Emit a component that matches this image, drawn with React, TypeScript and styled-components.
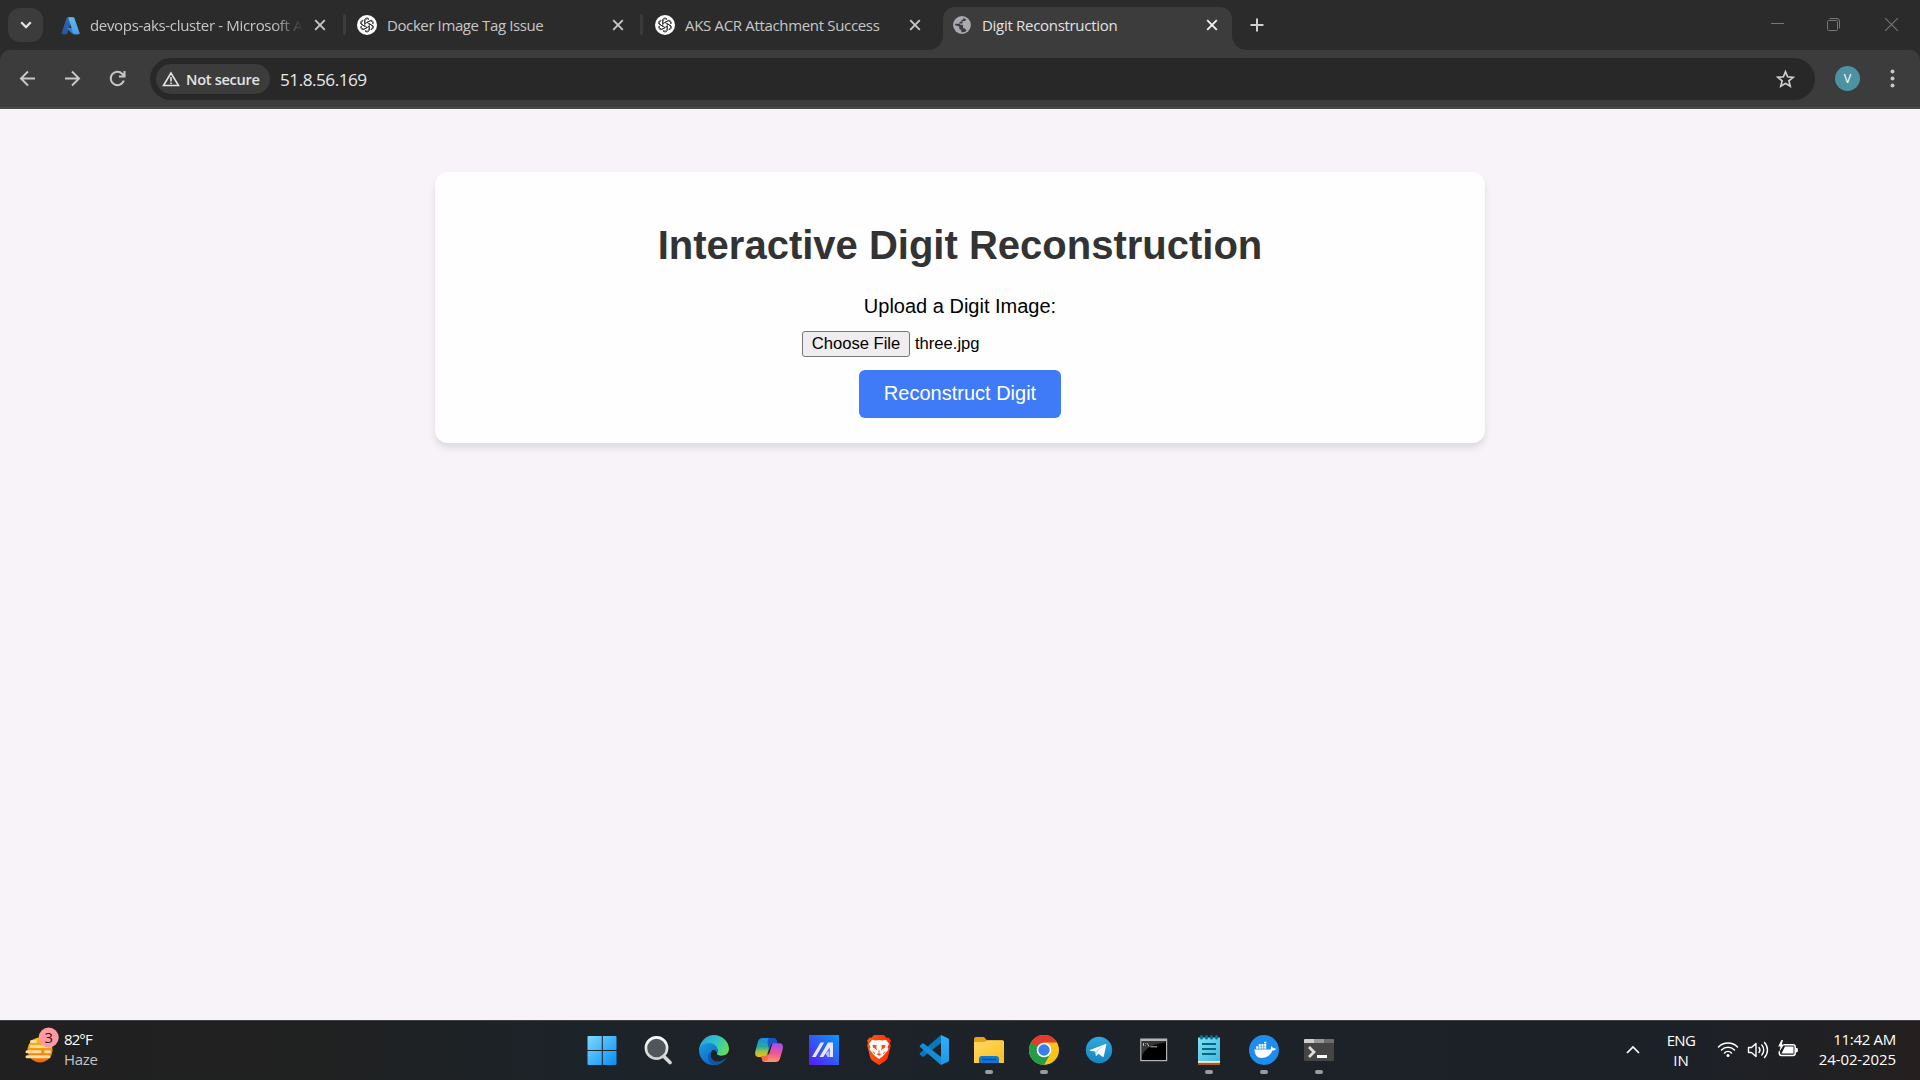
import React from "react";
import styled, { createGlobalStyle } from "styled-components";

const Global = createGlobalStyle`
  * { box-sizing: border-box; }
  html, body { margin: 0; padding: 0; overflow: hidden; background: #f7f3f9; }
  svg { display: block; flex: none; }
`;

const Screen = styled.div`
  width: 1920px;
  height: 1080px;
  display: flex;
  flex-direction: column;
  font-family: "Open Sans", "Noto Sans", sans-serif;
`;

/* ---------- browser ---------- */
const TabStrip = styled.header`
  height: 50px;
  background: #2b2b2b;
  display: flex;
  align-items: flex-start;
  padding-left: 8px;
`;

const TabSearch = styled.button`
  width: 35px;
  height: 34px;
  margin: 8px 4px 0 0;
  padding: 0;
  border: 0;
  border-radius: 12px;
  background: #3c3c3c;
  display: grid;
  place-items: center;
`;

const TabBox = styled.div<{ $active?: boolean; $w: number; $left: number; $right: number }>`
  width: ${(p) => p.$w}px;
  height: ${(p) => (p.$active ? 43 : 36)}px;
  margin-top: 7px;
  padding: 0 ${(p) => p.$right}px ${(p) => (p.$active ? 7 : 0)}px ${(p) => p.$left}px;
  display: flex;
  align-items: center;
  border-radius: 12px 12px 0 0;
  background: ${(p) => (p.$active ? "#3c3c3c" : "transparent")};
  color: ${(p) => (p.$active ? "#e3e3e3" : "#c7c7c7")};
`;

const Favicon = styled.span`
  width: 20px;
  margin-right: 10px;
  display: flex;
  justify-content: center;
`;

const TabTitle = styled.span<{ $spacing: number; $fade?: boolean }>`
  flex: 1;
  min-width: 0;
  overflow: hidden;
  white-space: nowrap;
  font-size: 15px;
  line-height: 22px;
  letter-spacing: ${(p) => p.$spacing}px;
  margin-right: 11px;
  ${(p) => p.$fade && "mask-image: linear-gradient(90deg, #000 86%, transparent 100%);"}
`;

const Separator = styled.i`
  width: 3px;
  height: 21px;
  margin-top: 14px;
  border-radius: 2px;
  background: #3c3c3c;
`;

const Flare = styled.i<{ $side: "left" | "right" }>`
  width: 14px;
  height: 14px;
  margin-top: 36px;
  background: radial-gradient(
    circle at ${(p) => (p.$side === "left" ? "0 0" : "100% 0")},
    transparent 13.5px,
    #3c3c3c 14.2px
  );
`;

const NewTab = styled.div`
  padding: 18px 0 0 4px;
  flex: 1;
`;

const WindowControls = styled.div`
  display: flex;
  gap: 43px;
  padding: 18px 22px 0 0;

  svg:last-child { margin-left: 2px; }
`;

const ToolbarBack = styled.div`
  background: #2b2b2b;
`;

const Toolbar = styled.div`
  height: 59px;
  display: flex;
  align-items: center;
  padding: 0 20px 1px 18px;
  background: #3c3c3c;
  border-bottom: 2px solid #4a4849;
  border-radius: 10px 10px 0 0;
`;

const NavButtons = styled.div`
  display: flex;
  gap: 25px;
  width: 132px;
`;

const Omnibox = styled.div`
  width: 1665px;
  height: 42px;
  margin-top: 1px;
  padding: 0 19px 0 6px;
  border-radius: 21px;
  background: #282828;
  display: flex;
  align-items: center;
`;

const Chip = styled.div`
  width: 114px;
  height: 30px;
  padding-left: 6px;
  display: flex;
  align-items: center;
  gap: 6px;
  border-radius: 15px;
  background: #3c3c3c;
  color: #e3e3e3;
  font-size: 14.6px;
  font-weight: 600;
  letter-spacing: -0.3px;
  white-space: nowrap;
`;

const Url = styled.span`
  flex: 1;
  padding: 1px 0 0 10px;
  color: #e8e8e8;
  font-size: 17.2px;
  letter-spacing: -0.5px;
`;

const Avatar = styled.div`
  width: 25px;
  height: 25px;
  margin: 0 28px 0 20px;
  border-radius: 50%;
  background: #4c92a3;
  color: #fff;
  font-size: 12.5px;
  line-height: 25px;
  text-align: center;
`;

/* ---------- page ---------- */
const Page = styled.main`
  flex: 1;
  background: #f7f3f9;
  padding-top: 63px;
  font-family: "Liberation Sans", Arial, sans-serif;
`;

const Card = styled.section`
  width: 1050px;
  height: 271px;
  margin: 0 auto;
  padding-top: 50px;
  border-radius: 12.5px;
  background: #fefefe;
  box-shadow: 0 5px 7.5px rgba(0, 0, 0, 0.1);
  display: flex;
  flex-direction: column;
  align-items: center;
`;

const Heading = styled.h1`
  margin: 0;
  height: 46px;
  font-size: 40px;
  line-height: 46px;
  color: #333;
  white-space: nowrap;
`;

const UploadLabel = styled.label`
  margin-top: 26px;
  height: 24px;
  font-size: 20px;
  line-height: 24px;
  color: #000;
`;

const FileRow = styled.div`
  width: 316px;
  height: 26px;
  margin-top: 13px;
  display: flex;
  align-items: center;
  gap: 5px;
  font-size: 16.6px;
  color: #000;
`;

const ChooseFile = styled.button`
  width: 108px;
  height: 26px;
  padding: 0;
  border: 1px solid #767676;
  border-radius: 3px;
  background: #f0edf0;
  font: inherit;
  color: #000;
  line-height: 22px;
`;

const Submit = styled.button`
  width: 202px;
  height: 48px;
  margin-top: 13px;
  padding: 0 0 2px;
  border: 0;
  border-radius: 6px;
  background: #3f7bf7;
  color: #fff;
  font: 20px "Liberation Sans", Arial, sans-serif;
`;

/* ---------- taskbar ---------- */
const Taskbar = styled.footer`
  height: 60px;
  border-top: 1px solid #3f4144;
  background: linear-gradient(90deg, #202020 0%, #202121 16%, #1c2329 30%, #1c2228 65%, #1c2128 86%, #222021 98%, #261f1f 100%);
  display: flex;
  color: #fff;
`;

const Weather = styled.div`
  width: 575px;
  display: flex;
  padding-left: 24px;
`;

const WeatherIcon = styled.div`
  width: 40px;
  padding-top: 5px;
`;

const Stack = styled.div<{ $align: string; $w?: number; $top?: number }>`
  ${(p) => p.$w && `width: ${p.$w}px;`}
  padding-top: ${(p) => p.$top ?? 8}px;
  text-align: ${(p) => p.$align};
  font-size: 15px;
  line-height: 20px;
  white-space: nowrap;
`;

const Line = styled.div<{ $dim?: boolean; $spacing?: number }>`
  letter-spacing: ${(p) => p.$spacing ?? 0}px;
  color: ${(p) => (p.$dim ? "#c4c4c4" : "#fff")};
`;

const Apps = styled.nav`
  display: flex;
  flex: 1;
`;

const AppCell = styled.div<{ $w: number }>`
  width: ${(p) => p.$w}px;
  display: flex;
  flex-direction: column;
  align-items: center;
  padding-top: 14px;
`;

const Running = styled.i`
  width: 8px;
  height: 4px;
  margin-top: 5px;
  border-radius: 2px;
  background: #9b9c9e;
`;

const Tray = styled.div`
  display: flex;
  width: 294px;
`;

const TrayIcons = styled.div`
  display: flex;
  gap: 8px;
  padding: 18px 0 0 21px;
  width: 122px;
`;

const Chevron = styled.div`
  padding: 23px 26px 0 0;
`;

/* ---------- icons ---------- */
const Close = ({ color = "#c7c7c7" }: { color?: string }) => (
  <svg width="12" height="12" viewBox="0 0 12 12" stroke={color} strokeWidth="1.9">
    <path d="M1.2 1.2 10.8 10.8M10.8 1.2 1.2 10.8" />
  </svg>
);

const Azure = () => (
  <svg width="19" height="19" viewBox="0 0 96 96">
    <defs>
      <linearGradient id="az1" x1="0" y1="0" x2="0" y2="1"><stop stopColor="#2d68b5" /><stop offset="1" stopColor="#2458a4" /></linearGradient>
      <linearGradient id="az2" x1="0" y1="0" x2="0" y2="1"><stop stopColor="#65b9ea" /><stop offset="1" stopColor="#4a9be8" /></linearGradient>
    </defs>
    <path d="M33 6h27L32 89a4 4 0 0 1-4 3H7a4 4 0 0 1-4-6L29 9a4 4 0 0 1 4-3z" fill="url(#az1)" />
    <path d="M71 60H28l28 28 15 4h14z" fill="#3b7fd3" />
    <path d="M67 9a4 4 0 0 0-4-3H36l27 86h27a4 4 0 0 0 4-6z" fill="url(#az2)" />
  </svg>
);

const Knot = () => (
  <svg width="20" height="20" viewBox="-10 -10 20 20" fill="none">
    <circle r="10" fill="#fff" />
    {[0, 60, 120, 180, 240, 300].map((a) => (
      <path key={a} transform={`rotate(${a})`} d="M-2.2 1.3V-3.9A2.55 2.55 0 0 1 2.1-5.4M0-2.6 3.9-4.8A2.6 2.6 0 0 1 6.2-1.4" stroke="#222" strokeWidth=".8" />
    ))}
  </svg>
);

const Globe = () => (
  <svg width="18" height="18" viewBox="2 2 20 20">
    <circle cx="12" cy="12" r="9.900" fill="#a9aab0" />
    <path d="M13.500 4.100C14 5.700 13 6.300 11.500 6.300v2H9.300v2.200H4.200a8 8 0 0 1-.1 1.600l4.800 1.600v1.500c0 1.200 1 2.200 2.300 2.200v2.700a8.200 8.200 0 0 0 6-1.600l-1.200-1.600c-.3-.8-1-1.300-1.900-1.300h-1v-2.800c0-.6-.5-1-1-1H9.700v-1.500h1.800c.7 0 1.200-.5 1.200-1.100V7.500h2a2 2 0 0 0 1.800-2z" fill="#3c3c3c" />
  </svg>
);

const Defs = () => (
  <svg width="0" height="0" style={{ position: "absolute" }}>
    <defs>
      <linearGradient id="win" gradientUnits="userSpaceOnUse" x1="0" y1="0" x2="29" y2="29"><stop stopColor="#7fdcff" /><stop offset="1" stopColor="#0a8ef5" /></linearGradient>
      <linearGradient id="edgeTop" x1="0" y1=".3" x2="1" y2=".7"><stop stopColor="#27a5de" /><stop offset=".5" stopColor="#33c4c8" /><stop offset="1" stopColor="#69df4c" /></linearGradient>
      <linearGradient id="edgeMid" x1="0" y1="0" x2=".7" y2="1"><stop stopColor="#1aa0e4" /><stop offset="1" stopColor="#0a62c4" /></linearGradient>
      <linearGradient id="copL" x1="0" y1="0" x2="0" y2="1"><stop stopColor="#168ee8" /><stop offset=".45" stopColor="#29a9a0" /><stop offset=".75" stopColor="#a7c83a" /><stop offset="1" stopColor="#f8b516" /></linearGradient>
      <linearGradient id="copR" x1=".3" y1="0" x2=".2" y2="1"><stop stopColor="#a64ded" /><stop offset=".5" stopColor="#ed5797" /><stop offset="1" stopColor="#ff9c5c" /></linearGradient>
      <linearGradient id="asus" x1="0" y1="1" x2="1" y2="0"><stop stopColor="#5b19ee" /><stop offset="1" stopColor="#0799ff" /></linearGradient>
      <linearGradient id="brave" x1="0" y1="0" x2="1" y2="0"><stop stopColor="#ff5a12" /><stop offset="1" stopColor="#ff2908" /></linearGradient>
      <linearGradient id="folder" x1="0" y1="0" x2="1" y2="1"><stop stopColor="#ffd968" /><stop offset="1" stopColor="#ffbf18" /></linearGradient>
      <linearGradient id="tg" x1="0" y1="0" x2="0" y2="1"><stop stopColor="#31a8e0" /><stop offset="1" stopColor="#1684bf" /></linearGradient>
      <linearGradient id="note" x1="0" y1="0" x2="1" y2="1"><stop stopColor="#82def6" /><stop offset="1" stopColor="#3eb9df" /></linearGradient>
      <linearGradient id="sun" x1="0" y1="0" x2="0" y2="1"><stop stopColor="#f9c40b" /><stop offset="1" stopColor="#ee6410" /></linearGradient>
      <linearGradient id="lens" x1="0" y1="0" x2="0" y2="1"><stop stopColor="#fff" /><stop offset="1" stopColor="#d0d0d0" /></linearGradient>
      <linearGradient id="code" x1="0" y1="0" x2="0" y2="1"><stop stopColor="#32adf5" /><stop offset="1" stopColor="#1c98ea" /></linearGradient>
    </defs>
  </svg>
);

const Icon = ({ children }: { children: React.ReactNode }) => (
  <svg width="30" height="30" viewBox="0 0 30 30">{children}</svg>
);

const appIcons: { name: string; width?: number; running?: boolean; art: React.ReactNode }[] = [
  { name: "start", width: 54, art: <g fill="url(#win)"><path d="M.5 2q0-1 1-1h13.300v14H.5zM15.800 1h12.700q1 0 1 1v13H15.800zM.5 16h14.300v14H1.500q-1 0-1-1zM15.800 16h13.700v13q0 1-1 1H15.800z" /></g> },
  { name: "search", width: 57, art: <><path d="M20.500 21 27 27.500" stroke="#d8d8d8" strokeWidth="3.600" strokeLinecap="round" /><circle cx="13.500" cy="13" r="10.600" fill="#50565a" stroke="url(#lens)" strokeWidth="2.600" /></> },
  { name: "edge", art: <>
    <path d="M0 15.500C.5 6.500 7 0 15 0s15 6.600 15 13.800c0 4.600-3.400 7-7.500 7-3.500 0-5-1.500-4.500-2.500 1.600-2.500.4-5.600-3-6.800C9.500 9.600 3 10.500 0 15.500z" fill="url(#edgeTop)" />
    <path d="M0 15.500c.5-4.600 5-7.500 9.500-7.500 4.800 0 9 2.500 9 6.800 0 2-1 3-1 3-.6-2.500-2.500-3.300-4-2.500-3.500 3-2.500 11.500 6 14.200A15 15 0 0 1 0 15.500z" fill="url(#edgeMid)" />
    <path d="M11.500 17c-1.500 7 4.500 11.500 11 8.800 2-.8 3.800-2 5.300-3.300-3 5.500-8 7.700-13 7.500-6-3-7.500-9.500-3.300-13z" fill="#1157a0" />
    <path d="M12.800 16.500c.8-2 3-2 4 .3.500 1.200.2 1.600 1.200 2.700 2.500 2.300 6.500 1.500 9.500.3-1 1.800-2.500 3.200-4.500 4-4.500 1.800-9.800-2-10.200-7.300z" fill="#1c2329" />
  </> },
  { name: "copilot", art: <>
    <path d="M8.500 3h11q2.200 0 3 2.600L23.500 9h-5q-2 0-2.700 2.200L13 20q-.8 2-3 2H4.500Q.5 22 1.300 16.500L4 6.500Q5 3 8.500 3z" fill="url(#copL)" />
    <path d="M15.500 3h4q2.200 0 3 2.600L23.500 9h-5q-2 0-2.700 2.200L15 14l-1.500-6q0-4 2-5z" fill="#1b53c8" />
    <path d="M21.500 27h-11q-2 0-2.500-2.600L7 21h4q2 0 2.700-2.200l3-8.600q.8-2 3-2h5.800q4.200 0 3.300 5.500L26 23.500q-1 3.500-4.500 3.500z" fill="url(#copR)" />
    <path d="M13.200 20 17 9.500q.5-1 1.500-1.200L15.500 18q-1 2.500-2.300 2z" fill="#1c2329" />
    <path d="M7 21h3.500q2.200 0 3-2.500L15 19l-1.500 4.500q-1.200 3.200-3.300 3.500-1.700 0-2.200-2.600z" fill="#f2672f" opacity=".75" />
  </> },
  { name: "asus", art: <><path d="M0 0h30v30H0z" fill="url(#asus)" /><path d="M3 22 11.500 7.500h3.700L6.700 22zM10.500 22 19 7.500h5V22h-3.300v-9.500L14.200 22z" fill="#e6e8ff" /><path d="m16.500 18.500 3.200-3 1 6.500h-2.200z" fill="#b9bdf8" /></> },
  { name: "brave", art: <>
    <path d="M10 0h10l2.500 2.700 2-.3L27 5.500l-1 2.500.8 2.500-3 12q-.5 2-2.300 3.200L15 30l-6.500-4.300q-1.800-1.200-2.300-3.200l-3-12L4 8 3 5.500l2.500-3.100 2 .3z" fill="url(#brave)" />
    <path d="m8 4.800 3.500.7L15 5l3.500.5 3.500-.7 3 4-1.500 3.500 1 2-3 4-2.500 2.700L15 24l-4-3-2.500-2.700-3-4 1-2L5 8.800z" fill="#fff" />
    <path d="m8.500 9.800 4.500.5-.8 1.700.8 3.500-1.500-1.500-2.500-1.500zM21.500 9.800l-4.500.5.800 1.700-.8 3.500 1.500-1.500 2.500-1.500zM12.500 19l2.500-1 2.500 1-2.500 1.800zM14.400 15.500h1.200v2h-1.200zM8 15.500l3 2.500-.5 1.500zM22 15.500 19 18l.5 1.500z" fill="#ff4a17" />
  </> },
  { name: "vscode", art: <>
    <path d="m1 19.500 2.200 2q.8.500 1.600 0L22 8V0L1 18q-.7.800 0 1.500z" fill="#0879bf" />
    <path d="m1 10.500 2.200-2q.8-.5 1.600 0L22 22v8L1 12q-.7-.8 0-1.500z" fill="#168cd4" />
    <path d="M22 30V0l7 3.200q1 .5 1 1.500v20.600q0 1-1 1.500z" fill="url(#code)" />
  </> },
  { name: "explorer", width: 54.500, running: true, art: <>
    <path d="M0 4q0-2 2-2h7q1.200 0 2 1l2 2.500h15q2 0 2 2V15H0z" fill="#e5a11a" />
    <path d="M0 7h11l2-1.800h15.500Q30 5.200 30 7v21H0z" fill="url(#folder)" />
    <path d="M5 24q0-3 3-3h14q3 0 3 3v4H5z" fill="#0f78d4" /><path d="M8 24.500h14" stroke="#084a91" strokeWidth="1.400" />
  </> },
  { name: "chrome", running: true, art: <>
    <circle cx="15" cy="15" r="15" fill="#fac417" />
    <path d="M15 15 2 7.500A15 15 0 0 0 15 30l6.500-11.500z" fill="#289b48" />
    <path d="M2 7.500a15 15 0 0 1 26 0H15l-6.500 11z" fill="#e33b2e" />
    <path d="M2 7.500 8.500 18.800 15 15z" fill="#289b48" />
    <circle cx="15" cy="15" r="7.300" fill="#fff" /><circle cx="15" cy="15" r="5.700" fill="#377ff0" />
  </> },
  { name: "telegram", art: <><circle cx="15" cy="15" r="13.200" fill="url(#tg)" /><path d="M6 15 21.500 9q1-.2.800.8l-2.500 11.400q-.3 1.200-1.300.6l-4-3-2 2q-.7.500-.8-.6l-.4-3.700L6 15.800q-.7-.4 0-.8z" fill="#fff" /><path d="m11.500 16 7.500-5-6 6-.3 3.200z" fill="#c5dfed" /></> },
  { name: "cmd", art: <><path d="M1.200 3.500h27v22.700h-27z" fill="#b5b5b8" /><path d="M2.500 6h24.500v19H2.500z" fill="#000" /><path d="M3 6h23.500v1.500Q10 9 5 17l-2 3z" fill="#353535" /><path d="M4.500 8v3M6.500 8v.6M6.500 10.500v.6M8 8l2 3.500M11.500 11.800h6.500" stroke="#bbb" strokeWidth="1" fill="none" /></> },
  { name: "notepad", running: true, art: <>
    <path d="M4 26h22v4H4z" fill="#b45c16" /><path d="M4 25h22v2.800H4z" fill="#f2f2ee" /><path d="M4 2.500h22V26H4z" fill="url(#note)" />
    {[7.500, 12.500, 17.500, 22.500].map((x) => <rect key={x} x={x - 1.300} y="0" width="2.600" height="4.500" rx="1.300" fill="#08708f" />)}
    <path d="M8 9h14M8 14h14M8 19h14" stroke="#08657f" strokeWidth="1.800" />
  </> },
  { name: "docker", running: true, art: <>
    <circle cx="15" cy="15" r="15" fill="#1d8cec" />
    <path d="M5.300 14.500h16.200q.8-.8.300-3.600 2 .8 2.300 2.400 1.800-.4 3.100.4-1 2-4 2Q20.500 23 12.500 23 6 23 5.300 14.500z" fill="#fff" />
    <g fill="#e6f3ff"><path d="M7 11.300h2.200v2.400H7zM9.700 11.300h2.200v2.400H9.700zM12.400 11.300h2.200v2.400h-2.200zM15.100 11.300h2.200v2.400h-2.200zM9.700 9h2.200v1.900H9.700zM12.400 9h2.200v1.900h-2.200zM15.100 9h2.200v1.900h-2.200zM15.100 6.800h2.200v1.800h-2.200z" /></g>
  </> },
  { name: "terminal", running: true, art: <><rect y="4" width="30" height="22" rx="1.200" fill="#454545" /><path d="M0 8V5q0-1 1-1h9v4z" fill="#cfcfcf" /><path d="M10 4h10v4H10z" fill="#999" /><path d="M20 4h9q1 0 1 1v3H20z" fill="#6d6d6d" /><path d="m5 12 5 5-5 5" stroke="#ddd" strokeWidth="2.800" fill="none" /><path d="M13 20h10v3H13z" fill="#fff" /></> },
];

interface TabProps {
  icon: React.ReactNode;
  title: string;
  width: number;
  left: number;
  right: number;
  spacing?: number;
  active?: boolean;
  fade?: boolean;
}
const Tab = ({ icon, title, width, left, right, spacing = -0.3, active, fade }: TabProps) => (
  <TabBox $w={width} $left={left} $right={right} $active={active}>
    <Favicon>{icon}</Favicon>
    <TabTitle $spacing={spacing} $fade={fade}>{title}</TabTitle>
    <Close color={active ? "#f0f0f0" : "#c7c7c7"} />
  </TabBox>
);

export default function App() {
  return (
    <Screen>
      <Global />
      <Defs />
      <TabStrip>
        <TabSearch>
          <svg width="12" height="8" viewBox="0 0 12 8" fill="none" stroke="#e3e3e3" strokeWidth="2.200"><path d="m1.200 1.300 4.800 4.800 4.800-4.800" /></svg>
        </TabSearch>
        <Tab width={296} left={13} right={17} icon={<Azure />} title="devops-aks-cluster - Microsoft A" spacing={-0.33} fade />
        <Separator />
        <Tab width={294} left={11} right={16.5} icon={<Knot />} title="Docker Image Tag Issue" spacing={-0.4} />
        <Separator />
        <Tab width={286} left={12} right={8} icon={<Knot />} title="AKS ACR Attachment Success" spacing={-0.33} />
        <Flare $side="left" />
        <Tab width={289} left={9} right={14.5} icon={<Globe />} title="Digit Reconstruction" active />
        <Flare $side="right" />
        <NewTab>
          <svg width="14" height="14" viewBox="0 0 14 14" stroke="#d0d0d0" strokeWidth="2"><path d="M7 .5v13M.5 7h13" /></svg>
        </NewTab>
        <WindowControls>
          <svg width="13" height="13" viewBox="0 0 13 13" stroke="#777"><path d="M0 5.500h13" /></svg>
          <svg width="13" height="13" viewBox="0 0 13 13" fill="none" stroke="#777"><rect x=".5" y="2.500" width="10" height="10" rx="1" /><path d="M2.500.5h7.500a2.500 2.500 0 0 1 2.500 2.500v7.500" /></svg>
          <svg width="13" height="13" viewBox="0 0 13 13" stroke="#777" strokeWidth="1.100"><path d="m0 0 13 13M13 0 0 13" /></svg>
        </WindowControls>
      </TabStrip>
      <ToolbarBack>
        <Toolbar>
          <NavButtons>
            <svg width="20" height="20" viewBox="0 0 20 20" fill="none" stroke="#c7c7c7" strokeWidth="2"><path d="M17 10.500H3.500M10 3.500l-7 7 7 7" /></svg>
            <svg width="20" height="20" viewBox="0 0 20 20" fill="none" stroke="#c7c7c7" strokeWidth="2"><path d="M2 10.500h13.500M9 3.500l7 7-7 7" /></svg>
            <svg width="20" height="20" viewBox="0 0 20 20" fill="none" stroke="#c7c7c7" strokeWidth="2"><path d="M15.800 12.500A6.700 6.700 0 1 1 14.200 5.700L16 7.500M16.500 3v5.600h-5.600" /></svg>
          </NavButtons>
          <Omnibox>
            <Chip>
              <svg width="18" height="16" viewBox="0 0 18 16" fill="none" stroke="#e3e3e3" strokeWidth="1.600"><path d="M9 2 1.500 14.500h15zM9 6v4.500M9 11.500v1.600" /></svg>
              Not secure
            </Chip>
            <Url>51.8.56.169</Url>
            <svg width="20" height="20" viewBox="0 0 20 20" fill="none" stroke="#d0d0d0" strokeWidth="1.700"><path d="m9.500 2.700 2.100 5.100 5.500.5-4.200 3.600 1.300 5.400-4.700-2.900-4.700 2.900 1.300-5.400-4.200-3.600 5.500-.5z" /></svg>
          </Omnibox>
          <Avatar>V</Avatar>
          <svg width="9" height="20" viewBox="0 0 9 20" fill="#c7c7c7"><circle cx="4.500" cy="3.500" r="2" /><circle cx="4.500" cy="10.500" r="2" /><circle cx="4.500" cy="17.500" r="2" /></svg>
        </Toolbar>
      </ToolbarBack>
      <Page>
        <Card>
          <Heading>Interactive Digit Reconstruction</Heading>
          <UploadLabel>Upload a Digit Image:</UploadLabel>
          <FileRow><ChooseFile>Choose File</ChooseFile>three.jpg</FileRow>
          <Submit>Reconstruct Digit</Submit>
        </Card>
      </Page>
      <Taskbar>
        <Weather>
          <WeatherIcon>
            <svg width="36" height="40" viewBox="0 0 36 40">
              <circle cx="16" cy="24" r="12.500" fill="url(#sun)" />
              <path d="M7.500 15.500h4M7 20.500h19M3 25.800h13M21.500 25.800h4M3 30.800h22" stroke="#f8dda0" strokeWidth="3" strokeLinecap="round" />
              <circle cx="24.700" cy="11.500" r="10" fill="#ff9aa3" />
              <text x="24.700" y="16.900" textAnchor="middle" fontSize="15" fill="#32191c" fontFamily="Open Sans, sans-serif">3</text>
            </svg>
          </WeatherIcon>
          <Stack $align="left">
            <Line $spacing={-0.9}>82°F</Line>
            <Line $dim $spacing={-0.3}>Haze</Line>
          </Stack>
        </Weather>
        <Apps>
          {appIcons.map((a) => (
            <AppCell key={a.name} $w={a.width ?? 55.1}>
              <Icon>{a.art}</Icon>
              {a.running && <Running />}
            </AppCell>
          ))}
        </Apps>
        <Tray>
          <Chevron>
            <svg width="14" height="12" viewBox="0 0 14 12" fill="none" stroke="#fff" strokeWidth="1.700"><path d="m1 9 6-6 6 6" /></svg>
          </Chevron>
          <Stack $align="center" $w={30} $top={9}>
            <Line $spacing={-0.6}>ENG</Line>
            <Line>IN</Line>
          </Stack>
          <TrayIcons>
            <svg width="22" height="22" viewBox="0 0 22 22" fill="none" stroke="#fff" strokeWidth="1.500" strokeLinecap="round"><path d="M1.500 8a13.500 13.500 0 0 1 19 0M4.500 11a9.200 9.200 0 0 1 13 0M7.500 14a5 5 0 0 1 7 0" /><circle cx="11" cy="16.500" r="1.500" fill="#fff" stroke="none" /></svg>
            <svg width="22" height="22" viewBox="0 0 22 22" fill="none" stroke="#fff" strokeWidth="1.400" strokeLinecap="round" strokeLinejoin="round"><path d="M1.500 8.500h3L9 4.500v13l-4.500-4h-3zM12 8.500a4 4 0 0 1 0 5M14.800 6a7.500 7.500 0 0 1 0 10M17.500 3.500a11 11 0 0 1 0 15" /></svg>
            <svg width="22" height="22" viewBox="0 0 22 22"><path d="M6.500 5.700h9.500a2.200 2.200 0 0 1 2.200 2.200v6.400a2.200 2.200 0 0 1-2.200 2.200H4.500a2.200 2.200 0 0 1-2.200-2.200v-2" fill="none" stroke="#fff" strokeWidth="1.500" /><path d="M8 7.500h8.500v7H4.500zM18.800 9h1q1 0 1 1v2.200q0 1-1 1h-1z" fill="#fff" /><path d="M4.500 1 1.200 7.500h2.300l-1 5L7 5.500H4.800L6 1z" fill="#fff" /></svg>
          </TrayIcons>
          <Stack $align="right" $w={78}>
            <Line $spacing={-0.3}>11:42 AM</Line>
            <Line $spacing={-0.1}>24-02-2025</Line>
          </Stack>
        </Tray>
      </Taskbar>
    </Screen>
  );
}
